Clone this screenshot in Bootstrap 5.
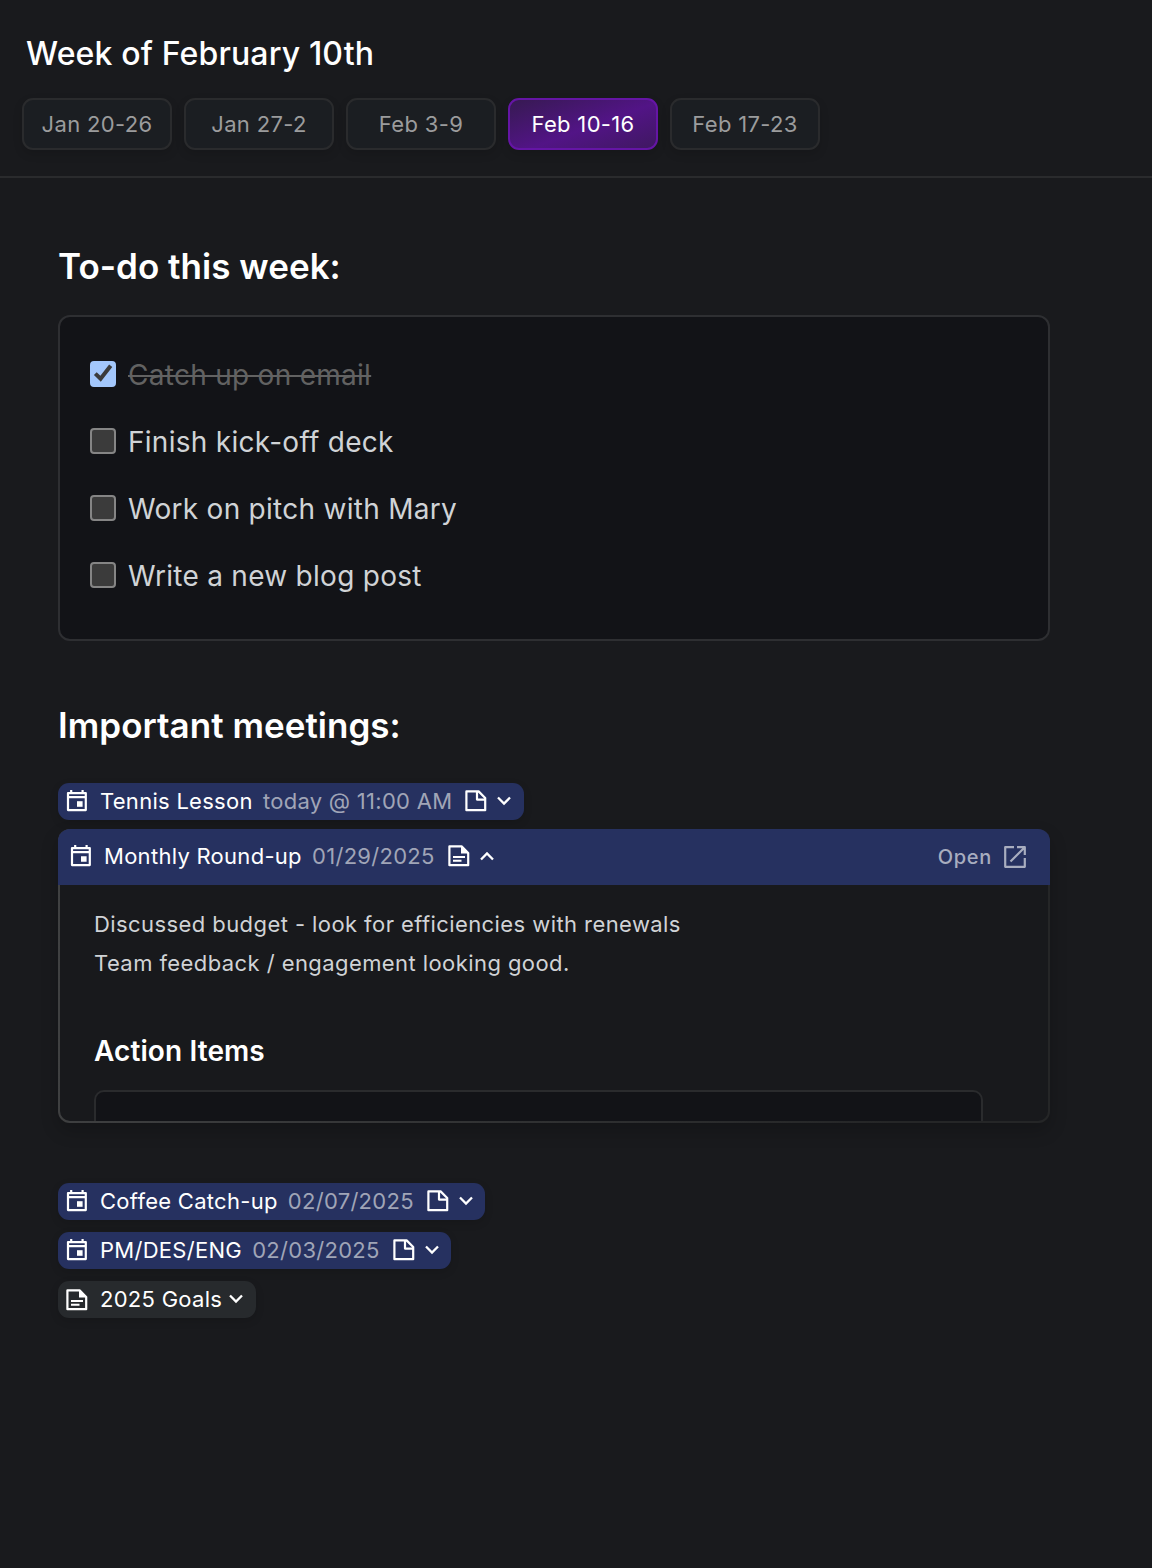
<!DOCTYPE html>
<html lang="en" data-bs-theme="dark">
<head>
<meta charset="utf-8">
<meta name="viewport" content="width=device-width, initial-scale=1">
<title>Week of February 10th</title>
<link href="https://cdn.jsdelivr.net/npm/bootstrap@5.3.0/dist/css/bootstrap.min.css" rel="stylesheet">
<style>
  body { background: #191a1d; color: #fff; font-family: Inter, "Liberation Sans", sans-serif; min-height: 1568px; }
  svg { display: block; flex: none; }
  .week-head { height: 178px; padding: 33px 22px 0; border-bottom: 2px solid #2a2b2d; }
  .week-title { font-size: 32px; line-height: 42px; font-weight: 500; letter-spacing: .15px; margin: 0 0 23px 4px; }
  .week-tabs { gap: 12px; }
  .week-tab { width: 150px; height: 52px; padding: 0; border: 2px solid #2a2b2d; border-radius: 11px; background: #1b1e22; color: #9b9c9d; font-size: 22px; letter-spacing: .33px; line-height: 48px; box-shadow: 0 4px 10px rgba(0,0,0,.13); }
  .week-tab.active { color: #fff; border-color: #6515a5; background: linear-gradient(160deg, #351a4f 0%, #521486 55%, #3e185f 100%) border-box; }
  .week-main { padding: 65px 102px 0 58px; }
  .sec-title { font-size: 35px; line-height: 46px; font-weight: 600; letter-spacing: .03px; margin: 0; }
  .todo-box { margin-top: 26px; height: 326px; padding: 24px 30px; border: 2px solid #2e2f32; border-radius: 12px; background: #121317; }
  .todo-row { height: 67px; gap: 12px; font-size: 28px; letter-spacing: .28px; color: #d0d3d6; }
  .todo-row .form-check-input { width: 26px; height: 26px; margin: -2px 0 0; border: 2px solid #858585; border-radius: 4px; background-color: #3b3b3b; flex: none; }
  .todo-row .form-check-input:checked { border-color: #a3c7fb; background-color: #a3c7fb; background-image: none; }
  .tick { position: absolute; left: 0; top: 19px; pointer-events: none; }
  .done { color: #626262; text-decoration: line-through; text-decoration-thickness: 2px; }
  .meet-title { margin-top: 61px; }
  .chip { width: fit-content; height: 37px; padding: 0 12.6px 0 8px; border-radius: 11px; background: #263160; font-size: 22px; line-height: 37px; letter-spacing: .28px; white-space: nowrap; box-shadow: 0 3px 8px rgba(0,0,0,.13); }
  .chip-gray { background: #272a2d; }
  .ico { margin-top: -2px; }
  .ico-file { margin: -2px 10px 0 12.9px; }
  .chev { margin-top: -1px; }
  .when { color: #a0a5b7; margin-left: 10.2px; }
  .meet { height: 294px; border-radius: 12px; background: linear-gradient(100deg, #404142, #252627 85%); box-shadow: 0 8px 18px rgba(0,0,0,.2); }
  .meet-head { height: 56px; padding: 0 24px 2px 12px; background: #263160; font-size: 22px; letter-spacing: .28px; line-height: 54px; }
  .meet-body { height: 236px; margin: 0 2px 2px; padding: 20px 65px 0 34px; border-radius: 0 0 10px 10px; background: #18191c; }
  .note { font-size: 22px; line-height: 39px; letter-spacing: .42px; color: #d0d3d6; margin: 0; }
  .act-title { font-size: 28px; line-height: 36px; font-weight: 600; letter-spacing: .1px; margin: 50px 0 21px; }
  .act-box { height: 80px; border: 2px solid #2a2b2d; border-radius: 10px; background: #121317; }
  .open-link { color: #a8adbf; font-size: 20px; font-weight: 500; letter-spacing: .7px; text-decoration: none; gap: 12px; line-height: 54px; padding-top: 2px; }
</style>
</head>
<body>
<svg width="0" height="0" class="position-absolute" aria-hidden="true">
  <symbol id="cal" viewBox="0 0 22 24"><path d="M2 4.1h17.8v17H2zM2 8.2h18M5.2 .9v3M16.6 .9v3" fill="none" stroke="#fff" stroke-width="2.2" stroke-linejoin="round"/><path d="M11 12.2h5.6v5.6H11z" fill="#fff"/></symbol>
  <symbol id="page" viewBox="0 0 22 22"><path d="M1.4 1.4h12.2l6.6 6.6v12.2H1.4zM12 1.4v8.2h8.2" fill="none" stroke="#fff" stroke-width="2.2" stroke-linejoin="round"/></symbol>
  <symbol id="doc" viewBox="0 0 22 22"><path d="M1.4 1.4h12.2l6.6 6.6v12.2H1.4z" fill="none" stroke="#fff" stroke-width="2.2" stroke-linejoin="round"/><path d="M13 1v7.6h7.6z" fill="#fff"/><path d="M5 12h12M5 15.8h8.5" stroke="#fff" stroke-width="2"/></symbol>
  <symbol id="down" viewBox="0 0 14 10"><path d="M1 1.5l6 6 6-6" fill="none" stroke="#fff" stroke-width="2.3"/></symbol>
  <symbol id="up" viewBox="0 0 14 10"><path d="M1 8.5l6-6 6 6" fill="none" stroke="#fff" stroke-width="2.3"/></symbol>
</svg>

<header class="week-head">
  <h1 class="week-title">Week of February 10th</h1>
  <nav class="week-tabs d-flex">
    <button class="btn week-tab">Jan 20-26</button>
    <button class="btn week-tab">Jan 27-2</button>
    <button class="btn week-tab">Feb 3-9</button>
    <button class="btn week-tab active">Feb 10-16</button>
    <button class="btn week-tab">Feb 17-23</button>
  </nav>
</header>

<main class="week-main">
  <h2 class="sec-title">To-do this week:</h2>
  <div class="todo-box">
    <label class="todo-row d-flex align-items-center position-relative"><input class="form-check-input" type="checkbox" checked>
      <svg class="tick" width="26" height="26" viewBox="0 0 26 26"><path d="M5.3 13.6l5.3 5.2L20.7 5.8" fill="none" stroke="#3b3b3b" stroke-width="4"/></svg>
      <span class="done">Catch up on email</span></label>
    <label class="todo-row d-flex align-items-center"><input class="form-check-input" type="checkbox"><span>Finish kick-off deck</span></label>
    <label class="todo-row d-flex align-items-center"><input class="form-check-input" type="checkbox"><span>Work on pitch with Mary</span></label>
    <label class="todo-row d-flex align-items-center"><input class="form-check-input" type="checkbox"><span>Write a new blog post</span></label>
  </div>

  <h2 class="sec-title meet-title">Important meetings:</h2>
  <div class="chip d-flex align-items-center" style="margin-top:35px">
    <svg width="22" height="24" class="ico me-2"><use href="#cal"/></svg><span class="ps-1">Tennis Lesson</span><span class="when">today @ 11:00 AM</span>
    <svg width="22" height="22" class="ico-file"><use href="#page"/></svg><svg width="14" height="10" class="chev"><use href="#down"/></svg>
  </div>

  <article class="meet overflow-hidden" style="margin-top:9px">
    <div class="meet-head d-flex align-items-center">
      <svg width="22" height="24" class="me-2"><use href="#cal"/></svg><span class="ps-1">Monthly Round-up</span><span class="when">01/29/2025</span>
      <svg width="22" height="22" class="ico-file mt-0"><use href="#doc"/></svg><svg width="14" height="10"><use href="#up"/></svg>
      <a class="open-link d-flex align-items-center ms-auto" href="#">Open
        <svg width="22" height="22" viewBox="0 0 22 22" class="chev"><path d="M10 1.2H1.2v19.6h19.6V12M13 1.2h7.8V9M20.8 1.2L6.5 15.5" fill="none" stroke="#a8adbf" stroke-width="2.2" stroke-linejoin="round"/></svg></a>
    </div>
    <div class="meet-body overflow-hidden">
      <p class="note">Discussed budget - look for efficiencies with renewals</p>
      <p class="note">Team feedback / engagement looking good.</p>
      <h3 class="act-title">Action Items</h3>
      <div class="act-box"></div>
    </div>
  </article>

  <div class="d-flex flex-column" style="gap:12px;margin-top:60px">
    <div class="chip d-flex align-items-center">
      <svg width="22" height="24" class="ico me-2"><use href="#cal"/></svg><span class="ps-1">Coffee Catch-up</span><span class="when">02/07/2025</span>
      <svg width="22" height="22" class="ico-file"><use href="#page"/></svg><svg width="14" height="10" class="chev"><use href="#down"/></svg>
    </div>
    <div class="chip d-flex align-items-center">
      <svg width="22" height="24" class="ico me-2"><use href="#cal"/></svg><span class="ps-1">PM/DES/ENG</span><span class="when">02/03/2025</span>
      <svg width="22" height="22" class="ico-file"><use href="#page"/></svg><svg width="14" height="10" class="chev"><use href="#down"/></svg>
    </div>
    <div class="chip chip-gray d-flex align-items-center">
      <svg width="22" height="22" class="me-2"><use href="#doc"/></svg><span class="ps-1">2025 Goals</span>
      <svg width="14" height="10" class="chev" style="margin-left:7px"><use href="#down"/></svg>
    </div>
  </div>
</main>
<script src="https://cdn.jsdelivr.net/npm/bootstrap@5.3.0/dist/js/bootstrap.bundle.min.js"></script>
</body>
</html>
